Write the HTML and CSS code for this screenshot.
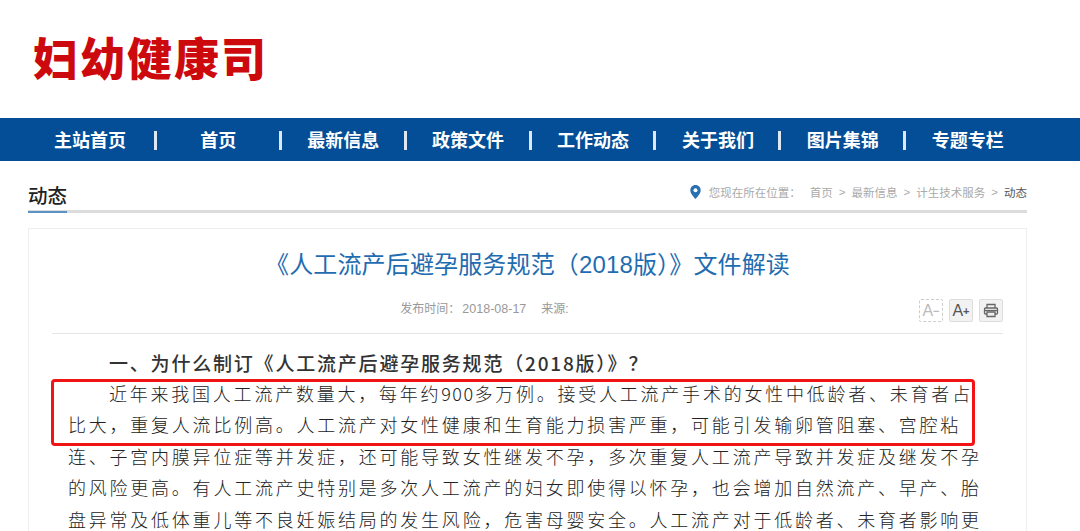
FILE: index.html
```html
<!DOCTYPE html>
<html lang="zh-CN">
<head>
    <meta charset="UTF-8">
    <meta name="viewport" content="width=device-width, initial-scale=1.0">
    <title>妇幼健康司</title>
    <link rel="stylesheet" href="styles.css">
</head>
<body>
    <header class="site-header">
        <div class="logo">妇幼健康司</div>
    </header>

    <nav class="main-nav">
        <a class="nav-item" href="#">主站首页</a>
        <a class="nav-item" href="#">首页</a>
        <a class="nav-item" href="#">最新信息</a>
        <a class="nav-item" href="#">政策文件</a>
        <a class="nav-item" href="#">工作动态</a>
        <a class="nav-item" href="#">关于我们</a>
        <a class="nav-item" href="#">图片集锦</a>
        <a class="nav-item nav-last" href="#">专题专栏</a>
    </nav>

    <div class="crumb-bar">
        <h2 class="section-name">动态</h2>
        <div class="crumbs">
            <svg class="pin" width="11" height="14" viewBox="0 0 11 14">
                <path d="M5.5 0C2.5 0 .3 2.3.3 5.2c0 3.4 3.4 6.5 5.2 8.8 1.8-2.3 5.2-5.4 5.2-8.8C10.700 2.300 8.500 0 5.500 0z" fill="#2a6fb0"/>
                <circle cx="5.500" cy="5.200" r="2" fill="#fff"/>
            </svg>
            <span class="crumb-label">您现在所在位置：</span>
            <span>首页</span><i>&gt;</i>
            <span>最新信息</span><i>&gt;</i>
            <span>计生技术服务</span><i>&gt;</i>
            <span class="crumb-now">动态</span>
        </div>
    </div>

    <main class="article">
        <h1 class="article-title">《人工流产后避孕服务规范（2018版）》文件解读</h1>
        <div class="article-meta">
            <div class="meta-text"><span>发布时间：</span><span class="meta-date">2018-08-17</span><span>来源:</span></div>
            <div class="tools">
                <button class="tool tool-off">A<sup>−</sup></button>
                <button class="tool">A<sup>+</sup></button>
                <button class="tool">
                    <svg width="16" height="15" viewBox="0 0 16 15" fill="none" stroke="#666" stroke-width="1.300">
                        <path d="M4 5V1.500h8V5"/>
                        <rect x="1.500" y="5" width="13" height="6" rx="1"/>
                        <path d="M4 9h8v4.500H4z" fill="#eee"/>
                        <path d="M1.500 7.500h13"/>
                    </svg>
                </button>
            </div>
        </div>
        <div class="article-body">
            <h3 class="body-head">一、为什么制订《人工流产后避孕服务规范（2018版）》？</h3>
            <p>近年来我国人工流产数量大，每年约<span class="num">900</span>多万例。接受人工流产手术的女性中低龄者、未育者占比大，重复人流比例高。人工流产对女性健康和生育能力损害严重，可能引发输卵管阻塞、宫腔粘连、子宫内膜异位症等并发症，还可能导致女性继发不孕，多次重复人工流产导致并发症及继发不孕的风险更高。有人工流产史特别是多次人工流产的妇女即使得以怀孕，也会增加自然流产、早产、胎盘异常及低体重儿等不良妊娠结局的发生风险，危害母婴安全。人工流产对于低龄者、未育者影响更</p>
            <div class="red-box"></div>
        </div>
    </main>
</body>
</html>
```

FILE: styles.css
```css
html, body {
    margin: 0;
    padding: 0;
    height: 531px;
    overflow: hidden;
}
body {
    background: #fff;
    font-family: "Liberation Sans", "Noto Sans CJK SC", sans-serif;
    color: #333;
}

/* Header */
.site-header {
    height: 118px;
    padding-left: 33px;
    box-sizing: border-box;
}
.logo {
    padding-top: 27px;
    font-family: "Noto Sans CJK SC", sans-serif;
    font-size: 45px;
    line-height: 60px;
    font-weight: 900;
    letter-spacing: 2px;
    color: #cc0a0e;
}

/* Nav */
.main-nav {
    height: 43px;
    background: #034e96;
    display: flex;
    padding-left: 31px;
}
.nav-item {
    width: 124.900px;
    box-sizing: border-box;
    position: relative;
    text-align: center;
    line-height: 46px;
    font-size: 18px;
    font-weight: 700;
    color: #fff;
    text-decoration: none;
}
.nav-item::after {
    content: "";
    position: absolute;
    right: -1px;
    top: 13px;
    width: 3px;
    height: 19px;
    background: #dfe8f2;
}
.nav-last::after {
    display: none;
}
.nav-item:first-child {
    padding-right: 7px;
}

/* Crumbs */
.crumb-bar {
    margin: 0 53px 0 28px;
    height: 49px;
    border-bottom: 3px solid #dcdcdc;
    display: flex;
    justify-content: space-between;
    align-items: flex-end;
}
.section-name {
    margin: 0 0 -3px;
    font-size: 19.500px;
    line-height: 29px;
    font-weight: 500;
    color: #222;
    border-bottom: 2px solid #5b93c7;
}
.crumbs {
    display: flex;
    align-items: center;
    height: 20px;
    margin-bottom: 8px;
    font-size: 11.500px;
    color: #aaa;
}
.crumbs i {
    font-style: normal;
    margin: 0 6px;
}
.pin {
    margin-right: 8px;
}
.crumb-label {
    margin-right: 9px;
}
.crumb-now {
    color: #555;
}

/* Article card */
.article {
    margin: 15px 53px 0 28px;
    height: 400px;
    border: 1px solid #eee;
    box-sizing: border-box;
    padding: 0 23px;
    position: relative;
}
.article-title {
    margin: 20px 0 0;
    text-align: center;
    font-size: 24px;
    line-height: 32px;
    font-weight: 400;
    letter-spacing: 0.150px;
    color: #1f6cb0;
}
.article-meta {
    position: relative;
    height: 34px;
    margin-top: 18px;
    border-bottom: 1px solid #e6e6e6;
}
.meta-text {
    display: flex;
    justify-content: center;
    padding-right: 86px;
    font-size: 12px;
    line-height: 20px;
    color: #999;
}
.meta-date {
    margin: 0 15px 0 2px;
    font-size: 12.500px;
}
.tools {
    position: absolute;
    right: 0;
    top: 0;
    display: flex;
    gap: 6px;
}
.tool {
    width: 24px;
    height: 23px;
    padding: 0;
    border: 1px solid #ddd;
    border-radius: 2px;
    background: #f2f2f2;
    font-family: "Liberation Sans", sans-serif;
    font-size: 16px;
    color: #555;
    display: flex;
    align-items: center;
    justify-content: center;
}
.tool sup {
    font-size: 11px;
    line-height: 0;
    font-weight: 700;
}
.tool-off {
    background: #fff;
    border: 1px dashed #ccc;
    color: #bbb;
}

/* Body text */
.article-body {
    font-family: "Noto Sans CJK SC", sans-serif;
    padding: 13px 0 0 16px;
    width: 917px;
}
.body-head {
    margin: 0;
    padding-left: 41px;
    font-size: 19px;
    line-height: 31px;
    font-weight: 500;
    letter-spacing: 1.800px;
    color: #333;
}
.article-body p {
    margin: 0;
    font-size: 18px;
    line-height: 31.400px;
    font-weight: 300;
    letter-spacing: 2.770px;
    text-indent: 41px;
    color: #222;
}
.num {
    letter-spacing: 1.400px;
}
.red-box {
    position: absolute;
    left: 22px;
    top: 150px;
    width: 918px;
    height: 61px;
    border: 3px solid #f01414;
    border-radius: 4px;
}
```
